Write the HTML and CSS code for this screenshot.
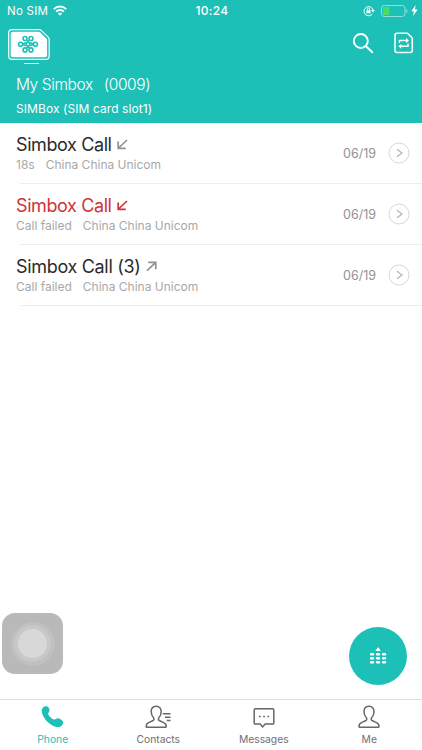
FILE: index.html
```html
<!DOCTYPE html>
<html lang="en">
<head>
<meta charset="utf-8">
<title>Simbox</title>
<link rel="stylesheet" href="styles.css">
</head>
<body>
<div class="app">
  <header class="header">
    <div class="status">
      <div class="status-left">
        <span class="carrier">No SIM</span>
        <svg class="wifi" width="14" height="11" viewBox="0 0 14 11" fill="none" stroke="#fff" stroke-width="2"><path d="M.8 4.100a8.900 8.900 0 0 1 12.400 0M3.100 6.600a5.600 5.600 0 0 1 7.800 0"/><path d="M7 10.700 4.800 8.500a3.200 3.200 0 0 1 4.400 0z" fill="#fff" stroke="none"/></svg>
      </div>
      <span class="clock">10:24</span>
      <div class="status-right">
        <svg class="lock" width="12" height="12" viewBox="0 0 12 12" fill="none" stroke="#fff"><path d="M9.400 8.900A4.600 4.600 0 1 1 10.100 5"/><path d="M8.200 5h3.600L10 7.400z" fill="#fff" stroke="none"/><path d="M3.400 5.300h4.200v3H3.400z" fill="#fff" stroke="none"/><path d="M4.300 5.600V4.300a1.200 1.200 0 0 1 2.400 0v1.300" stroke-width=".9"/></svg>
        <svg width="27" height="12" viewBox="0 0 27 12"><rect x=".5" y=".5" width="23.5" height="11" rx="2.8" fill="none" stroke="#8fe0da"/><path d="M25.200 4v4q1.300-.6 1.300-2t-1.300-2z" fill="#8fe0da"/><rect x="2" y="2" width="6.300" height="8" rx="1" fill="#4cdb60"/></svg>
        <svg width="7" height="11" viewBox="0 0 7 11"><path d="M4.700 0 .3 6.200h2.600L2 11l4.700-6.500H3.900z" fill="#fff"/></svg>
      </div>
    </div>
    <div class="toolbar">
      <div class="sim">
        <svg width="42" height="31" viewBox="0 0 42 31" fill="none"><path d="M4 .7h27.200q1.300 0 2.200.9l6.800 6.500q1 1 1 2.300V27q0 3.300-3.300 3.300H4Q.7 30.300.7 27V4Q.7.7 4 .7z" stroke="#fff" stroke-width="1.200"/><path d="M4.700 2.700h26q.8 0 1.400.6l6.300 6.200q.7.7.7 1.600v15.200q0 2-2 2H4.700q-2 0-2-2V4.700q0-2 2-2z" fill="#fff"/><g stroke="#1dc0b7" stroke-width="1.600"><circle cx="12.600" cy="15.200" r="2"/><circle cx="27.400" cy="15.200" r="2"/><circle cx="17" cy="9.500" r="2"/><circle cx="23" cy="9.500" r="2"/><circle cx="17" cy="20.900" r="2"/><circle cx="23" cy="20.900" r="2"/><path d="m18.200 11 3.600 3.400M21.800 11l-3.600 3.400M18.200 19.400l3.600-3.400M21.800 19.400l-3.600-3.400M14.400 14.200l2 2q1.400 1 2-.9-.6-2-2-1.100l-2 2M25.600 14.200l-2 2q-1.400 1-2-.9.6-2 2-1.100l2 2"/></g></svg>
        <span class="sim-active"></span>
      </div>
      <div class="actions">
        <svg width="22" height="22" viewBox="0 0 22 22" fill="none" stroke="#fff" stroke-width="1.900" stroke-linecap="round"><circle cx="8.800" cy="9" r="7"/><path d="m14 14.300 6.300 6"/></svg>
        <svg width="20" height="22" viewBox="0 0 20 22" fill="none" stroke="#fff" stroke-width="1.500"><path d="M3 1.200h10.500L18.300 6v12.400q0 2-2 2H3q-2 0-2-2V3.200q0-2 2-2z"/><path d="M5.400 11.100V8.500h7.400M14 11.500v2.800H6.500" stroke-width="1.400"/><path d="m12 6.100 3 2.400-3 2.400zM7.300 11.900l-3 2.400 3 2.400z" fill="#fff" stroke="none"/></svg>
      </div>
    </div>
    <div class="account"><span>My Simbox</span><span>(0009)</span></div>
    <div class="slot">SIMBox (SIM card slot1)</div>
  </header>

  <main class="calls">
    <div class="call">
      <div class="info">
        <div class="name"><span>Simbox Call</span><svg class="arrow" width="11" height="11" viewBox="0 0 11 11"><path d="M10 1 1.500 9M1.200 2.500v6.900h7.600"/></svg></div>
        <div class="detail"><span>18s</span><span>China China Unicom</span></div>
      </div>
      <span class="date">06/19</span>
      <svg class="more" width="22" height="22" viewBox="0 0 22 22"><circle cx="11" cy="11" r="10"/><path d="m9 7.200 5 3.800-5 3.800"/></svg>
    </div>
    <div class="call missed">
      <div class="info">
        <div class="name"><span>Simbox Call</span><svg class="arrow" width="11" height="11" viewBox="0 0 11 11"><path d="M10 1 1.500 9M1.200 2.500v6.900h7.600"/></svg></div>
        <div class="detail"><span>Call failed</span><span>China China Unicom</span></div>
      </div>
      <span class="date">06/19</span>
      <svg class="more" width="22" height="22" viewBox="0 0 22 22"><circle cx="11" cy="11" r="10"/><path d="m9 7.200 5 3.800-5 3.800"/></svg>
    </div>
    <div class="call outgoing">
      <div class="info">
        <div class="name"><span>Simbox Call (3)</span><svg class="arrow" width="11" height="11" viewBox="0 0 11 11"><path d="m1 9.700 8.500-8M2.200 1.400h7.600v6.900"/></svg></div>
        <div class="detail"><span>Call failed</span><span>China China Unicom</span></div>
      </div>
      <span class="date">06/19</span>
      <svg class="more" width="22" height="22" viewBox="0 0 22 22"><circle cx="11" cy="11" r="10"/><path d="m9 7.200 5 3.800-5 3.800"/></svg>
    </div>
  </main>

  <nav class="tabs">
    <div class="tab active">
      <svg width="24" height="24" viewBox="0 0 24 24"><path d="M1.600 3.100C3.100.8 6.100.5 7.500 2.600c1.200 1.900 1.500 3.500.2 4.900-.9 1-.7 1.700.1 2.800 1.100 1.600 2.600 3 4.300 3.900 1.100.6 1.700.5 2.700-.3 1.600-1.200 3.200-.7 5 .5 1.800 1.100 2.900 2.300 2.300 4-1 2.900-4.200 4.500-7.600 3.300C8.400 19.800 3.300 14.600 1.300 8.700.6 6.500.4 4.800 1.600 3.100z" fill="#1dc0b7"/></svg>
      <span>Phone</span>
    </div>
    <div class="tab">
      <svg width="26" height="24" viewBox="0 0 26 24" class="line"><path d="M11.200 1.300C8 1.300 6.200 3.600 6.200 6.600c0 2.400.8 4.500 2.200 5.900 1 1 .7 2.700-.7 3.300l-4 1.800c-1.600.7-2.500 2.100-2.500 3.900q0 .8.900.8h18.200q.9 0 .9-.8c0-1.800-.9-3.200-2.500-3.900l-4-1.800c-1.400-.6-1.700-2.300-.7-3.300 1.400-1.400 2.200-3.500 2.200-5.900 0-3-1.800-5.300-5-5.300z"/><path d="M17.800 8.700h7.700M20 12.200h5.500M21.800 15.400h3.700"/></svg>
      <span>Contacts</span>
    </div>
    <div class="tab">
      <svg width="22" height="24" viewBox="0 0 22 24" class="line"><path d="M2.400 3.700h17.200q1.200 0 1.200 1.200v13q0 1.200-1.200 1.200h-7.400L9.600 21.900l-2.400-2.800H2.400q-1.200 0-1.200-1.200v-13q0-1.200 1.200-1.200z"/><path d="M6 11.500h1.700M10.200 11.500h1.700M14.400 11.500h1.700" stroke-width="1.700"/></svg>
      <span>Messages</span>
    </div>
    <div class="tab">
      <svg width="24" height="24" viewBox="-1 0 24 24" class="line"><path d="M11 1.300C7.800 1.300 6 3.600 6 6.600c0 2.400.8 4.500 2.200 5.900 1 1 .7 2.700-.7 3.300l-4 1.800C1.900 18.300 1 19.700 1 21.500q0 .8.900.8h18.200q.9 0 .9-.8c0-1.800-.9-3.200-2.500-3.900l-4-1.800c-1.400-.6-1.700-2.300-.7-3.300C15.200 11.100 16 9 16 6.600c0-3-1.800-5.300-5-5.300z"/></svg>
      <span>Me</span>
    </div>
  </nav>

  <div class="assistive"><span class="ring"><span class="ring mid"><span class="ring core"></span></span></span></div>
  <div class="dial">
    <svg width="18" height="18" viewBox="0 0 18 18" fill="#fff"><path d="M8.700.6h.8L11.800 4H6.400z"/><rect x="1" y="6" width="4.200" height="2.500" rx="1"/><rect x="7" y="6" width="4.200" height="2.500" rx="1"/><rect x="13" y="6" width="4.200" height="2.500" rx="1"/><rect x="1" y="10" width="4.200" height="2.500" rx="1"/><rect x="7" y="10" width="4.200" height="2.500" rx="1"/><rect x="13" y="10" width="4.200" height="2.500" rx="1"/><rect x="1" y="14" width="4.200" height="2.500" rx="1"/><rect x="7" y="14" width="4.200" height="2.500" rx="1"/><rect x="13" y="14" width="4.200" height="2.500" rx="1"/></svg>
  </div>
</div>
</body>
</html>
```
FILE: styles.css
```css
* { box-sizing: border-box; }
body { margin: 0; font-family: Inter, "Liberation Sans", sans-serif; background: #fff; }
svg { display: block; flex: none; }
.app { position: relative; width: 422px; height: 750px; display: flex; flex-direction: column; overflow: hidden; }
.header { height: 122.5px; background: #1dc0b7; color: #fff; }
.status { height: 22px; display: grid; grid-template-columns: 1fr auto 1fr; align-items: center; padding: 0 5px 0 7px; }
.status-left { display: flex; align-items: center; gap: 5px; }
.wifi { margin-bottom: 1px; }
.carrier { font-size: 11.5px; letter-spacing: .25px; }
.clock { font-size: 12px; font-weight: 500; letter-spacing: .3px; line-height: 22px; }
.status-right { display: flex; align-items: center; justify-content: flex-end; gap: 4px; margin-right: -1px; padding-bottom: 1px; }
.lock { margin-right: 2px; }
.status-right svg:last-child { margin-left: -1px; }
.toolbar { height: 52px; display: flex; justify-content: space-between; padding: 7px 8px 0 8px; }
.sim { display: flex; flex-direction: column; align-items: center; gap: 3px; }
.sim-active { width: 15px; height: 1px; background: #fff; margin-left: 4px; }
.actions { display: flex; gap: 20px; padding-top: 3px; }
.account { display: flex; gap: 11px; padding-left: 16px; height: 22px; line-height: 22px; font-size: 15.5px; font-weight: 300; letter-spacing: -.4px; }
.slot { padding-left: 16px; margin-top: 5px; line-height: 15px; font-size: 12px; letter-spacing: .08px; }
.calls { flex: 1; }
.call { position: relative; height: 61px; display: flex; align-items: center; padding: 0 12px 0 16px; }
.call::after { content: ""; position: absolute; left: 20px; right: 0; bottom: 0; height: 1px; background: #ededed; }
.info { flex: 1; }
.name { display: flex; align-items: center; gap: 5px; height: 22px; font-size: 18px; letter-spacing: -.4px; color: #2b2b2b; }
.outgoing .name { gap: 6px; letter-spacing: -.32px; }
.arrow { fill: none; stroke: #929292; stroke-width: 1.7; }
.missed .name { color: #d0333a; }
.missed .arrow { stroke: #d0333a; }
.detail { display: flex; gap: 11px; font-size: 12px; line-height: 17px; color: #a8a8a8; }
.date { font-size: 12.5px; color: #929292; margin-right: 12px; }
.more { fill: none; stroke: #d8d8d8; }
.more path { stroke: #b4b4b4; stroke-width: 1.2; }
.tabs { height: 51px; border-top: 1px solid #dedede; display: grid; grid-template-columns: repeat(4, 1fr); }
.tab { display: flex; flex-direction: column; align-items: center; padding-top: 5px; font-size: 10.3px; line-height: 14px; color: #707070; }
.tab span { margin-top: 3px; }
.tab.active { color: #1dc0b7; }
.line { fill: none; stroke: #666; stroke-width: 1.5; }
.assistive { position: absolute; left: 2px; top: 613px; width: 61px; height: 61px; border-radius: 13px; background: #b9b9b9; display: flex; align-items: center; justify-content: center; }
.ring { width: 44px; height: 44px; border-radius: 50%; background: #c0c0c0; display: flex; align-items: center; justify-content: center; }
.ring.mid { width: 37px; height: 37px; background: #c8c8c8; }
.ring.core { width: 29px; height: 29px; background: #d8d8d8; }
.dial { position: absolute; left: 349px; top: 627px; width: 58px; height: 58px; border-radius: 50%; background: #1dc0b7; display: flex; align-items: center; justify-content: center; }
```
